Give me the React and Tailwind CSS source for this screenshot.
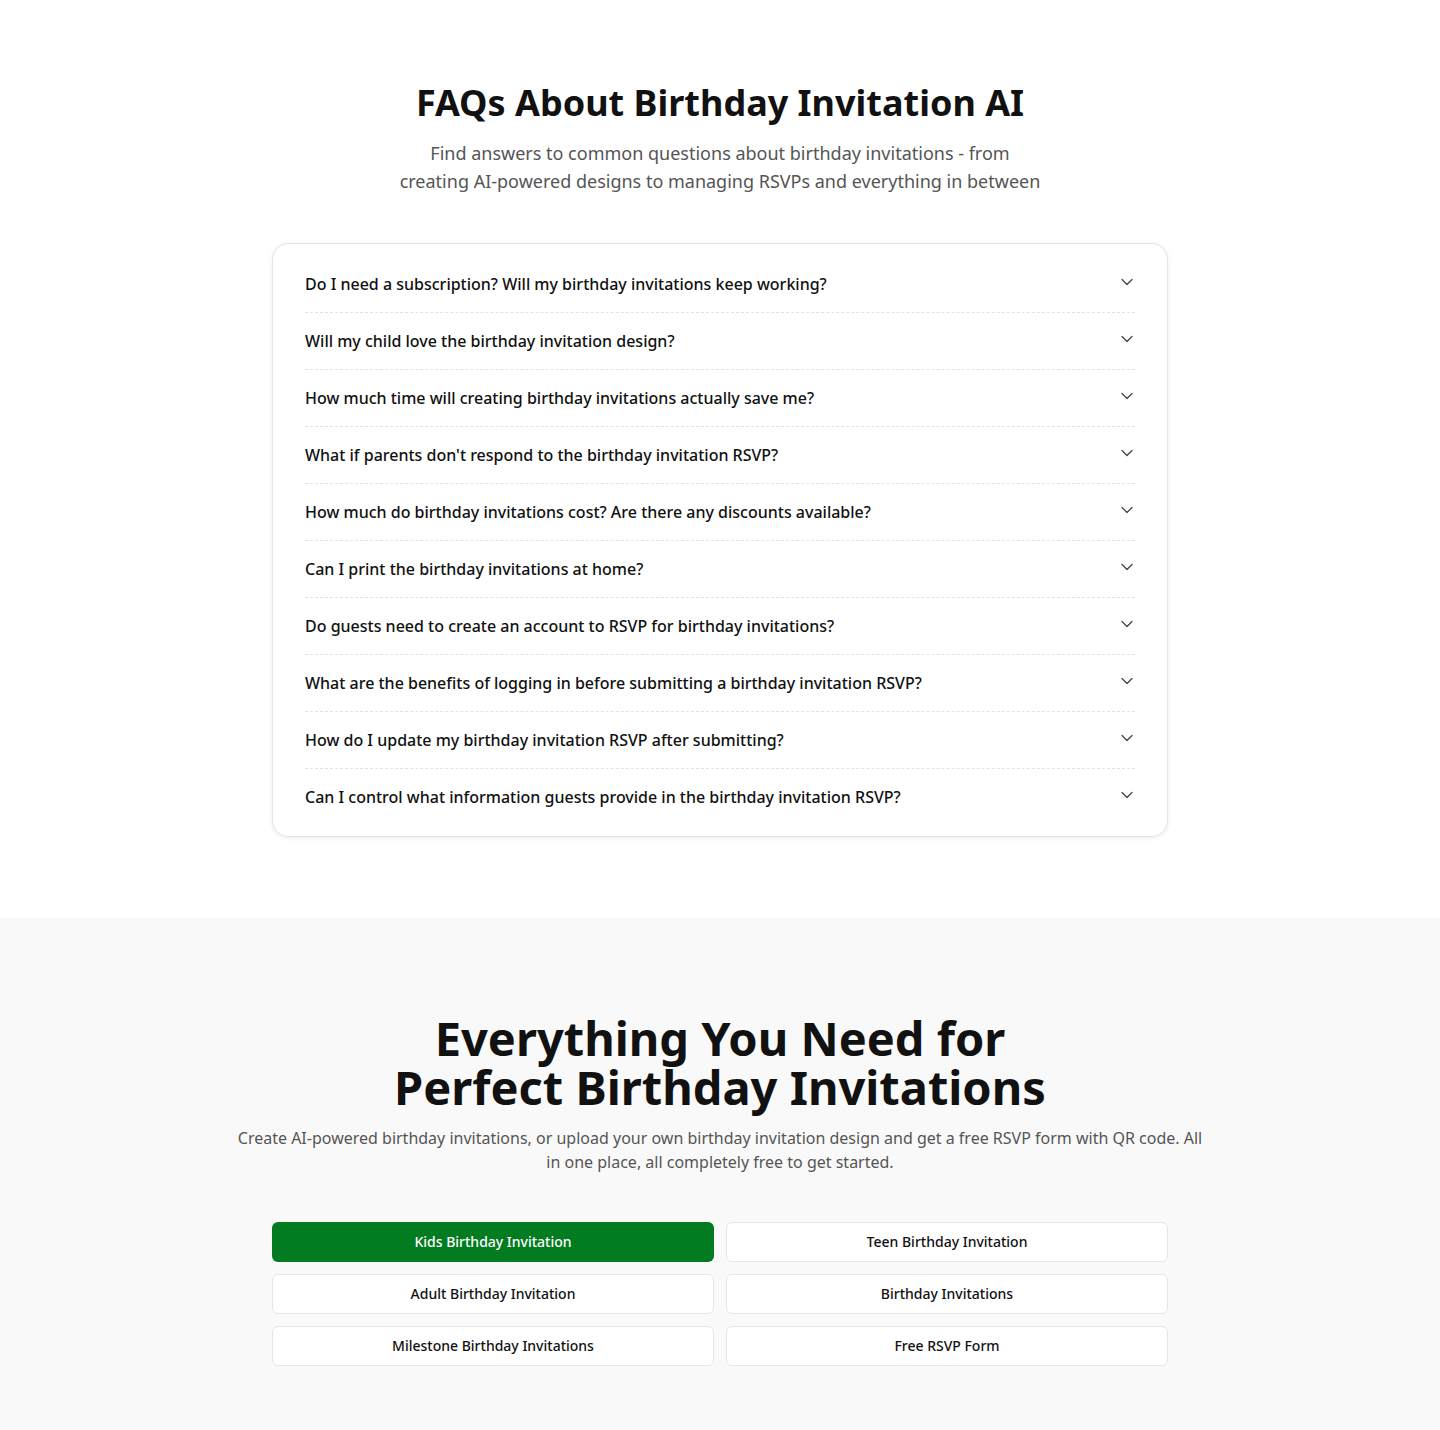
import { ChevronDown } from "lucide-react";

const faqs = [
  "Do I need a subscription? Will my birthday invitations keep working?",
  "Will my child love the birthday invitation design?",
  "How much time will creating birthday invitations actually save me?",
  "What if parents don't respond to the birthday invitation RSVP?",
  "How much do birthday invitations cost? Are there any discounts available?",
  "Can I print the birthday invitations at home?",
  "Do guests need to create an account to RSVP for birthday invitations?",
  "What are the benefits of logging in before submitting a birthday invitation RSVP?",
  "How do I update my birthday invitation RSVP after submitting?",
  "Can I control what information guests provide in the birthday invitation RSVP?",
];

const links = [
  "Kids Birthday Invitation",
  "Teen Birthday Invitation",
  "Adult Birthday Invitation",
  "Birthday Invitations",
  "Milestone Birthday Invitations",
  "Free RSVP Form",
];

export default function App() {
  return (
    <div className="font-['Noto_Sans',sans-serif] text-[#111] bg-white">

      {/* FAQ section */}
      <section className="pt-[83px] pb-[81px] px-4">
        <div className="max-w-4xl mx-auto">
          <h2 className="text-center text-4xl font-bold leading-10 mb-4">
            FAQs About Birthday Invitation AI
          </h2>
          <p className="text-center text-lg leading-7 text-[#555] max-w-[644px] mx-auto mb-12">
            Find answers to common questions about birthday invitations - from creating AI-powered designs to managing RSVPs and everything in between
          </p>

          <div className="bg-white border border-[#e5e5e5] rounded-2xl shadow-[0_1px_4px_rgba(0,0,0,0.08)] px-8 pt-3 pb-[10px]">
            {faqs.map((q, i) => (
              <div
                key={i}
                className={
                  "flex items-center justify-between h-[57px] border-b border-dashed " +
                  (i < faqs.length - 1 ? "border-[#e3e3e3]" : "border-transparent")
                }
              >
                <span className="text-base font-medium">{q}</span>
                <ChevronDown size={20} strokeWidth={1.5} className="text-[#444] -mt-1 -mr-0.5" />
              </div>
            ))}
          </div>
        </div>
      </section>

      {/* Links section */}
      <section className="bg-[#f9f9f9] pt-24 pb-16 px-4">
        <div className="max-w-4xl mx-auto">
          <h2 className="text-center text-[47px] font-bold leading-[49px] mb-[14px]">
            Everything You Need for
            <br />
            Perfect Birthday Invitations
          </h2>
          <p className="text-center text-base leading-6 text-[#555] max-w-[972px] mx-[-38px] mb-12">
            Create AI-powered birthday invitations, or upload your own birthday invitation design and get a free RSVP form with QR code. All in one place, all completely free to get started.
          </p>

          <div className="grid grid-cols-2 gap-3">
            {links.map((l, i) => (
              <a
                key={l}
                href="#"
                className={
                  i === 0
                    ? "h-10 flex items-center justify-center rounded-md bg-[#027b21] text-white text-sm font-medium"
                    : "h-10 flex items-center justify-center rounded-md bg-white border border-[#e5e5e5] text-[#111] text-sm font-medium"
                }
              >
                {l}
              </a>
            ))}
          </div>
        </div>
      </section>
    </div>
  );
}
